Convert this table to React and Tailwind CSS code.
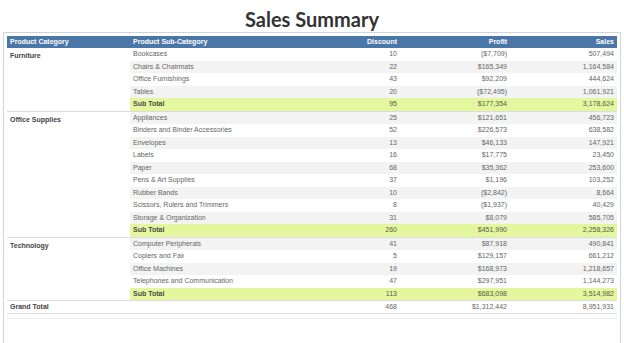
import React from 'react';

const groups = [
  {
    name: 'Furniture',
    rows: [
      ['Bookcases', '10', '($7,709)', '507,494'],
      ['Chairs & Chairmats', '22', '$165,349', '1,164,584'],
      ['Office Furnishings', '43', '$92,209', '444,624'],
      ['Tables', '20', '($72,495)', '1,061,921'],
    ],
    total: ['95', '$177,354', '3,178,624'],
  },
  {
    name: 'Office Supplies',
    rows: [
      ['Appliances', '25', '$121,651', '456,723'],
      ['Binders and Binder Accessories', '52', '$226,573', '638,582'],
      ['Envelopes', '13', '$46,133', '147,921'],
      ['Labels', '16', '$17,775', '23,450'],
      ['Paper', '68', '$35,362', '253,600'],
      ['Pens & Art Supplies', '37', '$1,196', '103,252'],
      ['Rubber Bands', '10', '($2,842)', '8,664'],
      ['Scissors, Rulers and Trimmers', '8', '($1,937)', '40,429'],
      ['Storage & Organization', '31', '$8,079', '585,705'],
    ],
    total: ['260', '$451,990', '2,258,326'],
  },
  {
    name: 'Technology',
    rows: [
      ['Computer Peripherals', '41', '$87,918', '490,841'],
      ['Copiers and Fax', '5', '$129,157', '661,212'],
      ['Office Machines', '19', '$168,973', '1,218,657'],
      ['Telephones and Communication', '47', '$297,951', '1,144,273'],
    ],
    total: ['113', '$683,098', '3,514,982'],
  },
];

function Cells({ cells, bold }) {
  return (
    <>
      <div className={`w-[210px] px-[3px] truncate ${bold ? 'font-bold text-[#4a4a4a]' : ''}`}>{cells[0]}</div>
      <div className="w-[60px] px-[3px] text-right">{cells[1]}</div>
      <div className="w-[110px] px-[3px] text-right">{cells[2]}</div>
      <div className="w-[107px] px-[3px] text-right">{cells[3]}</div>
    </>
  );
}

export default function App() {
  let idx = 0;
  return (
    <div className="w-[624px] h-[343px] bg-white overflow-hidden" style={{ fontFamily: '"Liberation Sans", Arial, sans-serif' }}>
      <div className="h-[32px] flex items-end justify-center pb-[3px]">
        <h1 className="text-[20px] leading-none font-bold text-[#333]" style={{ fontFamily: 'Lato, "Open Sans", sans-serif' }}>
          Sales Summary
        </h1>
      </div>
      <div className="mx-[3px] h-[311px] border border-b-0 border-[#cfd5dc] px-[3px] pt-[3px]">
        <div className="flex h-[12px] items-center bg-[#4b76a8] text-white font-bold text-[7px]">
          <div className="w-[123px] px-[3px]">Product Category</div>
          <div className="w-[210px] px-[3px]">Product Sub-Category</div>
          <div className="w-[60px] px-[3px] text-right">Discount</div>
          <div className="w-[110px] px-[3px] text-right">Profit</div>
          <div className="w-[107px] px-[3px] text-right">Sales</div>
        </div>
        <div className="text-[7px] text-[#666]">
          {groups.map((g) => (
            <div key={g.name} className="flex border-b border-[#dcdcdc]">
              <div className="w-[123px] px-[3px] pt-[3px] font-bold text-[#444]">{g.name}</div>
              <div className="flex-1">
                {g.rows.map((r) => {
                  const gray = idx % 2 === 1;
                  idx += 1;
                  return (
                    <div key={r[0]} className={`flex h-[12.5px] items-center ${gray ? 'bg-[#f3f3f3]' : 'bg-white'}`}>
                      <Cells cells={r} />
                    </div>
                  );
                })}
                {(() => {
                  idx += 1;
                  return (
                    <div className="flex h-[12.5px] items-center bg-[#e4f79e] text-[#5a5a4a]">
                      <Cells cells={['Sub Total', ...g.total]} bold />
                    </div>
                  );
                })()}
              </div>
            </div>
          ))}
          <div className="flex h-[12.5px] items-center border-b border-[#dcdcdc]">
            <div className="w-[123px] px-[3px] font-bold text-[#444]">Grand Total</div>
            <Cells cells={['', '468', '$1,312,442', '8,951,931']} />
          </div>
          <div className="h-[5px] border-b border-[#eeeeee]" />
        </div>
      </div>
    </div>
  );
}
